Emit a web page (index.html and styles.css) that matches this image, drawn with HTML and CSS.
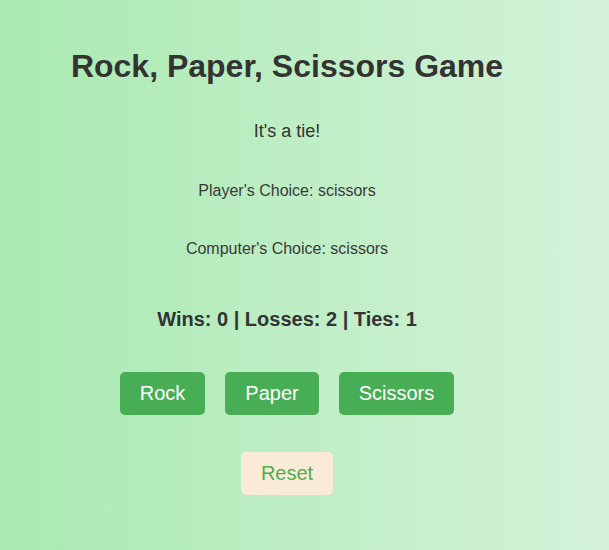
FILE: index.html
```html
<!DOCTYPE html>
<html>
<head>
<meta charset="utf-8">
<title>Rock, Paper, Scissors Game</title>
<link rel="stylesheet" href="styles.css">
</head>
<body>
<div class="game">
  <h1 class="title">Rock, Paper, Scissors Game</h1>
  <p class="result">It's a tie!</p>
  <p class="choice">Player's Choice: scissors</p>
  <p class="choice">Computer's Choice: scissors</p>
  <p class="score">Wins: 0 | Losses: 2 | Ties: 1</p>
  <div class="buttons">
    <button class="btn">Rock</button>
    <button class="btn">Paper</button>
    <button class="btn">Scissors</button>
  </div>
  <button class="reset">Reset</button>
</div>
</body>
</html>
```

FILE: styles.css
```css
html, body {
  margin: 0;
  height: 100%;
}
body {
  background: linear-gradient(to right, #a9eab1, #d4f2d9);
  font-family: "Liberation Sans", Arial, sans-serif;
  color: #333;
}
.game {
  width: 574px;
  display: flex;
  flex-direction: column;
  align-items: center;
  text-align: center;
  padding-top: 48px;
}
.title {
  font-size: 32px;
  font-weight: bold;
  margin: 0;
  line-height: 37px;
}
.result {
  font-size: 18px;
  margin: 36px 0 0;
  line-height: 21px;
}
.choice {
  font-size: 16px;
  margin: 40px 0 0;
  line-height: 18px;
  color: #3a3a3a;
}
.score {
  font-size: 20px;
  font-weight: bold;
  margin: 50px 0 0;
  line-height: 23px;
}
.buttons {
  display: flex;
  gap: 20px;
  margin-top: 41px;
}
.btn, .reset {
  font-family: "Liberation Sans", Arial, sans-serif;
  font-size: 20px;
  line-height: 23px;
  padding: 10px 20px;
  border: none;
  border-radius: 5px;
  cursor: pointer;
}
.btn {
  background: #48ae56;
  color: #fff;
}
.reset {
  margin-top: 37px;
  background: #faebd7;
  color: #4caf50;
}
```
